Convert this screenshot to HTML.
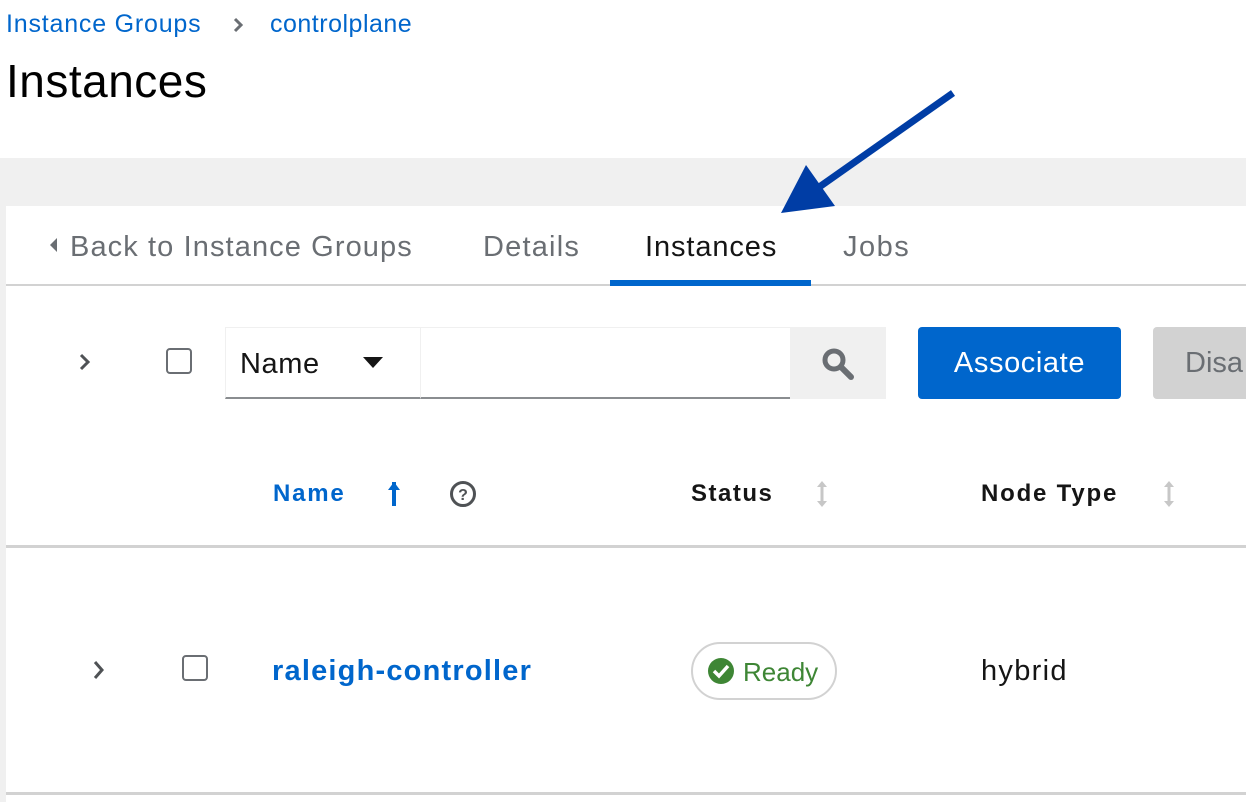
<!DOCTYPE html>
<html><head><meta charset="utf-8"><style>
*{margin:0;padding:0;box-sizing:border-box}
html,body{width:1246px;height:802px;overflow:hidden}
body{background:#fff;font-family:"Liberation Sans",sans-serif;position:relative}
.a{position:absolute;white-space:nowrap}
</style></head><body>
<div class="a" style="left:6px;top:10px;font-size:25px;letter-spacing:0.8px;color:#0066cc">Instance Groups</div>
<svg class="a" style="left:232px;top:16px" width="12" height="18"><path d="M3 3 L9 9 L3 15" stroke="#6a6e73" stroke-width="3" fill="none"/></svg>
<div class="a" style="left:270px;top:10px;font-size:25px;letter-spacing:0.5px;color:#0066cc">controlplane</div>
<div class="a" style="left:6px;top:54px;font-size:46px;letter-spacing:0.5px;color:#000">Instances</div>
<div class="a" style="left:0;top:158px;width:1246px;height:644px;background:#f0f0f0"></div>
<div class="a" style="left:6px;top:206px;width:1240px;height:596px;background:#fff"></div>
<div class="a" style="left:6px;top:284px;width:1240px;height:2px;background:#d2d2d2"></div>
<svg class="a" style="left:48px;top:236px" width="10" height="18"><path d="M9 2 L2 9 L9 16Z" fill="#6a6e73"/></svg>
<div class="a" style="left:70px;top:231px;font-size:29px;letter-spacing:1.1px;color:#6a6e73">Back to Instance Groups</div>
<div class="a" style="left:483px;top:231px;font-size:29px;letter-spacing:1.2px;color:#6a6e73">Details</div>
<div class="a" style="left:645px;top:231px;font-size:29px;letter-spacing:0.9px;color:#151515">Instances</div>
<div class="a" style="left:843px;top:231px;font-size:29px;letter-spacing:1.5px;color:#6a6e73">Jobs</div>
<div class="a" style="left:610px;top:280px;width:201px;height:6px;background:#0066cc"></div>
<svg class="a" style="left:0;top:0" width="1246" height="802"><line x1="953" y1="93" x2="815" y2="190" stroke="#003da5" stroke-width="7"/><path d="M781 213 L806 165 L835 206Z" fill="#003da5"/></svg>
<svg class="a" style="left:78px;top:352px" width="14" height="20"><path d="M3 3 L10 10 L3 17" stroke="#4f5255" stroke-width="3" fill="none"/></svg>
<div class="a" style="left:166px;top:348px;width:26px;height:26px;border:2px solid #6a6e73;border-radius:4px"></div>
<div class="a" style="left:225px;top:327px;width:196px;height:72px;border:1px solid #f0f0f0;border-bottom:2px solid #8a8d90"></div>
<div class="a" style="left:240px;top:348px;font-size:29px;letter-spacing:0.6px;color:#151515">Name</div>
<svg class="a" style="left:362px;top:356px" width="22" height="14"><path d="M1 1 L21 1 L11 12Z" fill="#151515"/></svg>
<div class="a" style="left:421px;top:327px;width:370px;height:72px;border-top:1px solid #f0f0f0;border-bottom:2px solid #8a8d90"></div>
<div class="a" style="left:790px;top:327px;width:96px;height:72px;background:#f0f0f0"></div>
<svg class="a" style="left:820px;top:346px" width="36" height="36"><circle cx="14" cy="14" r="9" stroke="#6a6e73" stroke-width="5" fill="none"/><line x1="21" y1="21" x2="31" y2="31" stroke="#6a6e73" stroke-width="6" stroke-linecap="round"/></svg>
<div class="a" style="left:918px;top:327px;width:203px;height:72px;background:#0066cc;border-radius:4px;color:#fff;font-size:29px;letter-spacing:0.6px;text-align:center;line-height:72px">Associate</div>
<div class="a" style="left:1153px;top:327px;width:93px;height:72px;background:#d2d2d2;border-radius:4px 0 0 4px;color:#6a6e73;font-size:29px;line-height:72px;padding-left:32px;overflow:hidden">Disa</div>
<div class="a" style="left:273px;top:480px;font-size:24px;letter-spacing:1.8px;font-weight:bold;color:#0066cc">Name</div>
<svg class="a" style="left:386px;top:480px" width="16" height="28"><path d="M8 2 L8 26" stroke="#0066cc" stroke-width="4"/><path d="M2 10 L8 2 L14 10Z" fill="#0066cc"/></svg>
<svg class="a" style="left:449px;top:480px" width="30" height="30"><circle cx="14" cy="14" r="11.5" stroke="#4f5255" stroke-width="3" fill="none"/><text x="14" y="20" font-size="16" font-weight="bold" text-anchor="middle" fill="#4f5255" font-family="Liberation Sans">?</text></svg>
<div class="a" style="left:691px;top:480px;font-size:24px;letter-spacing:1.5px;font-weight:bold;color:#151515">Status</div>
<svg class="a" style="left:814px;top:479px" width="16" height="30"><path d="M8 4 L8 26" stroke="#c7c7c7" stroke-width="3"/><path d="M3 8 L8 2 L13 8Z M3 22 L8 28 L13 22Z" fill="#c7c7c7"/></svg>
<div class="a" style="left:981px;top:480px;font-size:24px;letter-spacing:1.8px;font-weight:bold;color:#151515">Node Type</div>
<svg class="a" style="left:1161px;top:479px" width="16" height="30"><path d="M8 4 L8 26" stroke="#c7c7c7" stroke-width="3"/><path d="M3 8 L8 2 L13 8Z M3 22 L8 28 L13 22Z" fill="#c7c7c7"/></svg>
<div class="a" style="left:6px;top:545px;width:1240px;height:3px;background:#d2d2d2"></div>
<svg class="a" style="left:92px;top:659px" width="14" height="22"><path d="M3 3 L10 11 L3 19" stroke="#4f5255" stroke-width="3" fill="none"/></svg>
<div class="a" style="left:182px;top:655px;width:26px;height:26px;border:2px solid #6a6e73;border-radius:4px"></div>
<div class="a" style="left:272px;top:655px;font-size:29px;letter-spacing:1.2px;font-weight:bold;color:#0066cc">raleigh-controller</div>
<div class="a" style="left:691px;top:642px;width:146px;height:58px;border:2px solid #d2d2d2;border-radius:29px"></div>
<svg class="a" style="left:707px;top:657px" width="28" height="28"><circle cx="14" cy="14" r="13" fill="#3e8635"/><path d="M7 14 L12 19 L21 9" stroke="#fff" stroke-width="3.5" fill="none"/></svg>
<div class="a" style="left:743px;top:657px;font-size:26px;color:#3e8635">Ready</div>
<div class="a" style="left:981px;top:655px;font-size:29px;letter-spacing:1.3px;color:#151515">hybrid</div>
<div class="a" style="left:6px;top:792px;width:1240px;height:3px;background:#d2d2d2"></div>
</body></html>
